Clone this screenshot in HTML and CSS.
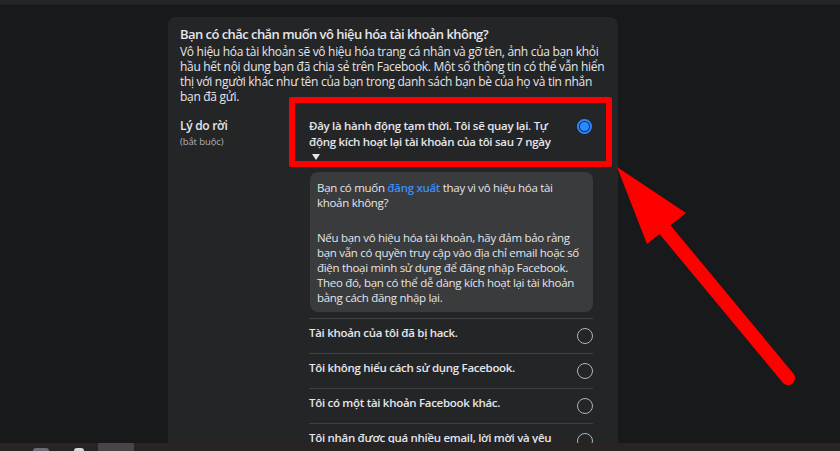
FILE: index.html
```html
<!DOCTYPE html>
<html lang="vi">
<head>
<meta charset="utf-8">
<title>Vô hiệu hóa tài khoản</title>
<link rel="stylesheet" href="styles.css">
</head>
<body>
<div class="topbar"></div>
<main class="page">
  <section class="card">
    <h2 class="title">Bạn có chắc chắn muốn vô hiệu hóa tài khoản không?</h2>
    <p class="desc">Vô hiệu hóa tài khoản sẽ vô hiệu hóa trang cá nhân và gỡ tên, ảnh của bạn khỏi hầu hết nội dung bạn đã chia sẻ trên Facebook. Một số thông tin có thể vẫn hiển thị với người khác như tên của bạn trong danh sách bạn bè của họ và tin nhắn bạn đã gửi.</p>
    <div class="reason">
      <div class="label">
        <div class="lbl">Lý do rời</div>
        <div class="req">(bắt buộc)</div>
      </div>
      <div class="options">
        <div class="opt first">
          <div class="row">
            <span class="txt">Đây là hành động tạm thời. Tôi sẽ quay lại. Tự động kích hoạt lại tài khoản của tôi sau 7 ngày</span>
            <span class="radio on"></span>
          </div>
          <span class="caret"></span>
          <span class="mark"></span>
        </div>
        <div class="explain">
          <p>Bạn có muốn <a class="link">đăng xuất</a> thay vì vô hiệu hóa tài khoản không?</p>
          <p>Nếu bạn vô hiệu hóa tài khoản, hãy đảm bảo rằng bạn vẫn có quyền truy cập vào địa chỉ email hoặc số điện thoại mình sử dụng để đăng nhập Facebook. Theo đó, bạn có thể dễ dàng kích hoạt lại tài khoản bằng cách đăng nhập lại.</p>
        </div>
        <div class="opt">
          <div class="row"><span class="txt">Tài khoản của tôi đã bị hack.</span><span class="radio"></span></div>
        </div>
        <div class="opt">
          <div class="row"><span class="txt">Tôi không hiểu cách sử dụng Facebook.</span><span class="radio"></span></div>
        </div>
        <div class="opt">
          <div class="row"><span class="txt">Tôi có một tài khoản Facebook khác.</span><span class="radio"></span></div>
        </div>
        <div class="opt">
          <div class="row"><span class="txt">Tôi nhận được quá nhiều email, lời mời và yêu cầu từ Facebook.</span><span class="radio"></span></div>
        </div>
      </div>
    </div>
  </section>
</main>
<div class="taskbar">
  <span class="tb-icon a"></span>
  <span class="tb-icon b"></span>
  <span class="tb-icon c"></span>
</div>
<svg class="arrow" viewBox="0 0 840 451" width="840" height="451" aria-hidden="true">
  <line x1="662" y1="226" x2="788" y2="378" stroke="#ff0000" stroke-width="14" stroke-linecap="round"/>
  <polygon points="617,167 686,213 647,244" fill="#ff0000"/>
</svg>
</body>
</html>
```
FILE: styles.css
```css
html, body {
  margin: 0;
  padding: 0;
}

body {
  width: 840px;
  height: 451px;
  overflow: hidden;
  background: #18191a;
  color: #e4e6eb;
  font-family: "Open Sans", "Noto Sans", sans-serif;
  display: flex;
  flex-direction: column;
  position: relative;
}

.topbar {
  flex: none;
  height: 4px;
  background: #252628;
  border-bottom: 1px solid #1f2022;
}

.page {
  flex: 1;
  overflow: hidden;
  padding: 12px 0 0 168px;
  display: flex;
  align-items: flex-start;
}

.card {
  width: 450px;
  box-sizing: border-box;
  background: #242526;
  border-radius: 8px 8px 0 0;
  padding: 7px 12px 0 12px;
  min-height: 460px;
}

.title {
  margin: 0;
  font-size: 13px;
  font-weight: 600;
  letter-spacing: -0.55px;
  line-height: 20px;
}

.desc {
  margin: 0;
  font-size: 12px;
  letter-spacing: -0.3px;
  line-height: 15px;
}

.reason {
  display: grid;
  grid-template-columns: 129px 284px;
  margin-top: 8px;
}

.label {
  padding-top: 5px;
}

.lbl {
  font-size: 12px;
  font-weight: 600;
  letter-spacing: -0.3px;
  line-height: 18px;
}

.req {
  font-size: 9.5px;
  letter-spacing: -0.1px;
  line-height: 14px;
  color: #b0b3b8;
}

.opt {
  position: relative;
  border-top: 1px solid #3e4042;
  padding: 6px 0 9px;
  font-size: 11.5px;
  font-weight: 600;
  letter-spacing: -0.3px;
  line-height: 16px;
}

.opt.first {
  border-top: 0;
  padding: 6px 0 6px;
}

.row {
  display: flex;
  justify-content: space-between;
  align-items: flex-start;
}

.txt {
  width: 255px;
}

.radio {
  flex: none;
  box-sizing: border-box;
  width: 16px;
  height: 16px;
  margin-top: 3px;
  border: 1px solid #b0b3b8;
  border-radius: 50%;
}

.radio.on {
  width: 15px;
  height: 15px;
  margin-top: 1px;
  margin-right: 1px;
  border: 2px solid #2d88ff;
  background: radial-gradient(circle, #2d88ff 0 4.3px, #242526 4.8px);
}

.caret {
  display: block;
  width: 0;
  height: 0;
  margin: 4px 0 0 3px;
  border-left: 4px solid transparent;
  border-right: 4px solid transparent;
  border-top: 6px solid #e4e6eb;
}

.mark {
  position: absolute;
  left: -20px;
  right: -19px;
  top: -15px;
  bottom: -1px;
  border: 6px solid #ff0000;
  border-radius: 2px;
  pointer-events: none;
}

.explain {
  margin: 6px 0 6px 1px;
  padding: 8px 7px 7px;
  background: #3a3b3c;
  border-radius: 8px;
  font-size: 11.5px;
  letter-spacing: -0.3px;
  line-height: 15px;
}

.explain p {
  margin: 0;
}

.explain p + p {
  margin-top: 20px;
}

.link {
  color: #3b8df5;
  font-weight: 600;
}

.taskbar {
  flex: none;
  height: 8px;
  background: #2a2323;
  display: flex;
  align-items: flex-end;
}

.tb-icon {
  display: block;
  height: 8px;
}

.tb-icon.a {
  width: 16px;
  margin-left: 33px;
  height: 3px;
  background: #6c6b70;
  border-radius: 4px 4px 0 0;
}

.tb-icon.b {
  width: 10px;
  margin-left: 25px;
  height: 3px;
  background: #d8d8d8;
  border-radius: 6px 6px 0 0;
}

.tb-icon.c {
  width: 36px;
  margin-left: 14px;
  background: #4a4446;
}

.arrow {
  position: absolute;
  left: 0;
  top: 0;
  pointer-events: none;
}
```
